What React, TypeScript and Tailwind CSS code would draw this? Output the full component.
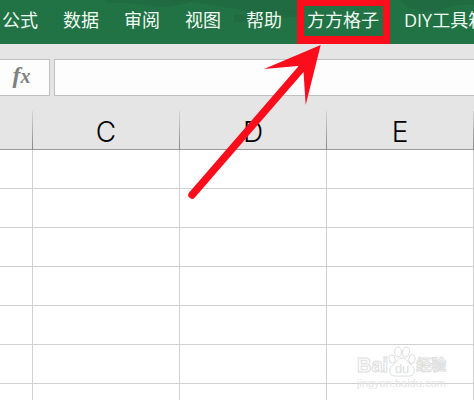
const TABS = ['公式', '数据', '审阅', '视图', '帮助', '方方格子', 'DIY工具箱'];
const COLUMNS = ['C', 'D', 'E'];
const ROWS = [1, 2, 3, 4, 5, 6, 7];

function Ribbon() {
  return (
    <nav className="relative h-11 overflow-hidden bg-[#217346]">
      <svg className="absolute inset-0 h-11 w-full" viewBox="0 0 474 44" preserveAspectRatio="xMinYMin slice" aria-hidden="true">
        <g fill="#1f6640" fillOpacity="0.6">
          <path d="M104 0h90c-12 6-28 8-42 6-18-3-34-4-45-3z" />
          <path d="M170 0h128v14c-18-5-34-1-50-3-22-3-42-8-78-11z" />
          <path d="M234 14c12 0 14 6 24 2 10-5 26-6 40-5v6c-20-1-38 6-64 5z" />
          <path d="M400 0h74v5c-20-3-30 6-44 6-14 1-24-4-30-11z" />
        </g>
      </svg>
      <div className="relative flex h-10 items-center gap-[25px] pl-0.5">
        {TABS.map((tab) => (
          <button key={tab} className="shrink-0 whitespace-nowrap text-lg text-[#f0fbf2]">
            {tab}
          </button>
        ))}
      </div>
    </nav>
  );
}

function FormulaBar() {
  return (
    <div className="flex gap-1 pt-[15px]">
      <button
        aria-label="Insert function"
        className="h-[37px] w-[50px] shrink-0 border border-l-0 border-[#c0c0c0] bg-[#fdfdfd] pr-1.5 pb-1 font-['Liberation_Serif',serif] text-2xl leading-none font-bold text-[#808080] italic"
      >
        f<span className="text-xl">x</span>
      </button>
      <input
        aria-label="Formula"
        className="h-[37px] min-w-0 flex-1 border border-r-0 border-[#c0c0c0] bg-[#fdfdfd] px-2 outline-none"
      />
    </div>
  );
}

function Sheet() {
  return (
    <table className="mt-[15px] w-full table-fixed border-separate border-spacing-0">
      <thead>
        <tr>
          <td className="h-[39px] w-[33px] border-r border-b border-[#9a9a9a] p-0 [border-right-color:transparent] bg-[linear-gradient(to_bottom,#d6d6d6,#858585)] bg-[length:1px_100%] bg-[position:right] bg-no-repeat bg-origin-border" />
          {COLUMNS.map((col) => (
            <th
              key={col}
              scope="col"
              className="h-[39px] border-r border-b border-[#9a9a9a] p-0 pt-1 text-center text-[28px] leading-8 font-light text-black [border-right-color:transparent] bg-[linear-gradient(to_bottom,#d6d6d6,#858585)] bg-[length:1px_100%] bg-[position:right] bg-no-repeat bg-origin-border font-['Inter',sans-serif]"
            >
              {col}
            </th>
          ))}
        </tr>
      </thead>
      <tbody className="bg-white">
        {ROWS.map((row) => (
          <tr key={row}>
            <td className="h-[39px] border-r border-b border-[#d0d0d0] p-0" />
            {COLUMNS.map((col) => (
              <td key={col} className="h-[39px] border-r border-b border-[#d0d0d0] p-0" />
            ))}
          </tr>
        ))}
      </tbody>
    </table>
  );
}

function Watermark() {
  return (
    <div className="absolute top-[345px] left-[357px] font-['Liberation_Sans','Noto_Sans_CJK_SC',sans-serif] text-white [-webkit-text-stroke:1px_#dedede]">
      <div className="flex h-8 items-end">
        <span className="text-xl leading-6 font-bold">Bai</span>
        <span className="relative h-[31px] w-7">
          <svg className="absolute inset-0" width="28" height="31" viewBox="0 0 28 31" fill="#fff" stroke="#dedede" aria-hidden="true">
            <ellipse cx="4" cy="13" rx="3" ry="4" transform="rotate(-15 4 13)" />
            <ellipse cx="10" cy="6" rx="3.500" ry="5" />
            <ellipse cx="18" cy="6" rx="3.500" ry="5" transform="rotate(12 18 6)" />
            <ellipse cx="24" cy="13" rx="3" ry="4.500" transform="rotate(15 24 13)" />
            <path d="M14 12c-4 0-5 3-8 6-3 2-5 5-4 9 1 4 7 3 12 3s11 1 12-3c1-4-1-7-4-9-3-3-4-6-8-6z" />
          </svg>
          <span className="absolute inset-x-0 bottom-0 text-center text-[13px] leading-4 [-webkit-text-stroke:0] text-[#dedede]">du</span>
        </span>
        <span className="text-[15px] leading-6 font-bold">经验</span>
      </div>
      <div className="text-[11px] leading-3 [-webkit-text-stroke:0] text-[#e4e4e4]">jingyan.baidu.com</div>
    </div>
  );
}

export default function App() {
  return (
    <div className="relative h-screen overflow-hidden bg-[#e5e5e5] font-['Open_Sans','Noto_Sans_CJK_SC',sans-serif]">
      <Ribbon />
      <FormulaBar />
      <Sheet />
      <Watermark />
      {/* callout around the 方方格子 tab */}
      <div className="absolute top-0 left-[297px] h-11 w-[93px] border-x-[7px] border-t-[6px] border-b-8 border-[#fc0d1b]" />
      <svg className="pointer-events-none absolute top-10 left-[180px]" width="150" height="165" viewBox="180 40 150 165" fill="#fc0d1b" aria-hidden="true">
        <path d="M192 195L302 68" stroke="#fc0d1b" strokeWidth="7.500" strokeLinecap="round" />
        <path d="M320.7 45L264 69L298 66L303.500 72L305.700 105z" />
      </svg>
    </div>
  );
}
